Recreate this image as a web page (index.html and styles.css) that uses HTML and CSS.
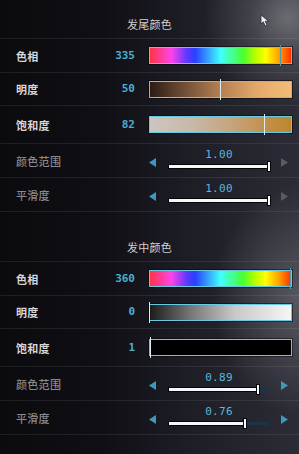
FILE: index.html
```html
<!DOCTYPE html>
<html lang="zh-CN">
<head>
<meta charset="utf-8">
<link rel="stylesheet" href="styles.css">
</head>
<body>
<div class="panel">
  <section class="sec">
    <div class="head">发尾颜色</div>
    <div class="row r1">
      <span class="label">色相</span><span class="val">335</span>
      <div class="bar hue"><i class="mark mhue" style="left:93%"></i></div>
    </div>
    <div class="row r2">
      <span class="label">明度</span><span class="val">50</span>
      <div class="bar bri1"><i class="mark" style="left:50%"></i></div>
    </div>
    <div class="row r3">
      <span class="label">饱和度</span><span class="val">82</span>
      <div class="bar sat1"><i class="mark" style="left:81.5%"></i></div>
    </div>
    <div class="row srow r4">
      <span class="label dim">颜色范围</span>
      <div class="slider">
        <svg class="arrow on" width="7" height="9" viewBox="0 0 7 9"><polygon points="7,0 7,9 0,4.5"/></svg>
        <div class="smid"><span class="sval">1.00</span><div class="track"><i class="fill" style="width:100%"></i></div></div>
        <svg class="arrow off" width="7" height="9" viewBox="0 0 7 9"><polygon points="0,0 0,9 7,4.5"/></svg>
      </div>
    </div>
    <div class="row srow r5">
      <span class="label dim">平滑度</span>
      <div class="slider">
        <svg class="arrow on" width="7" height="9" viewBox="0 0 7 9"><polygon points="7,0 7,9 0,4.5"/></svg>
        <div class="smid"><span class="sval">1.00</span><div class="track"><i class="fill" style="width:100%"></i></div></div>
        <svg class="arrow off" width="7" height="9" viewBox="0 0 7 9"><polygon points="0,0 0,9 7,4.5"/></svg>
      </div>
    </div>
  </section>

  <section class="sec sec2">
    <div class="head">发中颜色</div>
    <div class="row r1">
      <span class="label">色相</span><span class="val">360</span>
      <div class="bar hue"><i class="mark mhue" style="left:100%"></i></div>
    </div>
    <div class="row r2">
      <span class="label">明度</span><span class="val">0</span>
      <div class="bar bri2"><i class="mark" style="left:0%"></i></div>
    </div>
    <div class="row r3">
      <span class="label">饱和度</span><span class="val">1</span>
      <div class="bar sat2"><i class="mark" style="left:0.5%"></i></div>
    </div>
    <div class="row srow r4">
      <span class="label dim">颜色范围</span>
      <div class="slider">
        <svg class="arrow on" width="7" height="9" viewBox="0 0 7 9"><polygon points="7,0 7,9 0,4.5"/></svg>
        <div class="smid"><span class="sval">0.89</span><div class="track"><i class="fill" style="width:89%"></i></div></div>
        <svg class="arrow on" width="7" height="9" viewBox="0 0 7 9"><polygon points="0,0 0,9 7,4.5"/></svg>
      </div>
    </div>
    <div class="row srow r5">
      <span class="label dim">平滑度</span>
      <div class="slider">
        <svg class="arrow on" width="7" height="9" viewBox="0 0 7 9"><polygon points="7,0 7,9 0,4.5"/></svg>
        <div class="smid"><span class="sval">0.76</span><div class="track"><i class="fill" style="width:76%"></i></div></div>
        <svg class="arrow on" width="7" height="9" viewBox="0 0 7 9"><polygon points="0,0 0,9 7,4.5"/></svg>
      </div>
    </div>
  </section>

  <svg class="cursor" width="11" height="13" viewBox="0 0 11 13"><path d="M1 1 L1 10 L3.3 7.8 L5.2 12 L7 11.2 L5.2 7.2 L8.5 7.2 Z" fill="#f2f2f2" stroke="#2a2a30" stroke-width="0.8" stroke-linejoin="round"/></svg>
</div>
</body>
</html>
```

FILE: styles.css
```css
html, body {
  margin: 0;
  padding: 0;
}
body {
  width: 299px;
  height: 454px;
  overflow: hidden;
  font-family: "Noto Sans CJK SC", "Noto Sans", sans-serif;
  background:
    radial-gradient(circle at 288px 18px, rgba(150,150,155,0.6) 0, rgba(150,150,155,0.25) 38px, rgba(150,150,155,0) 85px),
    radial-gradient(ellipse 85px 115px at 298px 300px, rgba(130,130,138,0.5), rgba(130,130,138,0) 100%),
    linear-gradient(to right, #0b0a0e 0%, #100f15 35%, #1d1d26 62%, #2c2c36 100%);
}
.panel {
  position: relative;
  height: 454px;
}
.sec2 {
  margin-top: 11px;
}
.head {
  height: 39px;
  box-sizing: border-box;
  padding-top: 16px;
  text-align: center;
  font-size: 11px;
  line-height: 16px;
  color: #cfcfd2;
  letter-spacing: 0.3px;
  border-bottom: 1px solid rgba(255,255,255,0.08);
}
.row {
  display: grid;
  grid-template-columns: 1fr auto 143px;
  column-gap: 14px;
  align-items: center;
  padding: 0 7px 0 16px;
  box-sizing: border-box;
  border-bottom: 1px solid rgba(255,255,255,0.08);
}
.r1 { height: 34px; }
.r2 { height: 33px; }
.r3 { height: 38px; }
.r4 { height: 34px; }
.r5 { height: 34px; }
.srow {
  grid-template-columns: 1fr 143px;
}
.label {
  font-size: 11px;
  font-weight: 700;
  color: #d6d6d8;
  line-height: 14px;
  letter-spacing: 0.3px;
}
.label.dim {
  color: #8a8a8e;
  font-weight: 500;
}
.val {
  font-family: "DejaVu Sans Mono", monospace;
  font-weight: 700;
  font-size: 11px;
  color: #4aaed4;
  text-align: right;
  line-height: 14px;
}
.bar {
  position: relative;
  height: 17px;
  box-sizing: border-box;
  border: 1px solid #66cbe2;
  box-shadow: 0 0 0 1px rgba(0,0,0,0.45);
}
.hue {
  background: linear-gradient(to right, #ff3444 0%, #ff44e8 15%, #6038ff 26%, #2a40ff 32%, #40ffff 50%, #48ff30 66%, #b0ff00 74%, #ffff00 82%, #ff9a00 92%, #ff3000 100%);
}
.bri1 {
  background: linear-gradient(to right, #2a1c14 0%, #6a4a34 22%, #b07c50 48%, #e2a86a 75%, #f4bc78 100%);
}
.sat1 {
  background: linear-gradient(to right, #cbc6c2 0%, #c8b8a6 30%, #c6a27a 60%, #c28e44 85%, #c0862c 100%);
}
.bri2 {
  background: linear-gradient(to right, #1c1c1c 0%, #7a7a7a 30%, #c8c8c8 60%, #f6f6f6 100%);
}
.sat2 {
  background: #000;
}
.mark {
  position: absolute;
  top: -3px;
  bottom: -3px;
  width: 1px;
  margin-left: -1px;
  background: #d8eef2;
}
.mark.mhue {
  background: #4a9cbc;
}
.slider {
  display: flex;
  align-items: center;
}
.arrow {
  display: block;
  margin-top: 4px;
}
.arrow.on { fill: #3c98bc; }
.arrow.off { fill: #5a5a62; }
.slider .arrow:first-child {
  margin-left: 0;
}
.smid {
  width: 100px;
  margin: 0 12px 3px 13px;
  display: flex;
  flex-direction: column;
  align-items: center;
}
.sval {
  font-family: "DejaVu Sans Mono", monospace;
  font-size: 11px;
  line-height: 10px;
  color: #5ab8de;
  letter-spacing: 0.3px;
}
.track {
  align-self: stretch;
  position: relative;
  height: 3px;
  margin-top: 5px;
  background: #1c3448;
}
.fill {
  display: block;
  position: relative;
  height: 3px;
  background: #f4f8fa;
  box-shadow: 0 0 0 1px #050608;
}
.fill::after {
  content: "";
  position: absolute;
  right: -1px;
  top: -3px;
  width: 2px;
  height: 9px;
  background: #f4f8fa;
  box-shadow: 0 0 0 1px #050608;
}
.cursor {
  position: absolute;
  left: 260px;
  top: 14px;
}
```
